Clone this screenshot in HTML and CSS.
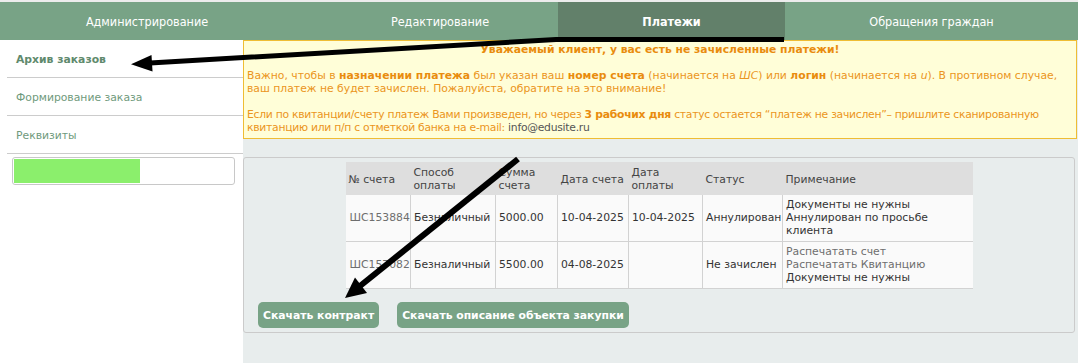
FILE: index.html
```
<!DOCTYPE html>
<html lang="ru">
<head>
  <meta charset="UTF-8" />
  <title>Платежи</title>
  <link rel="stylesheet" href="styles.css">
</head>
<body>
  <div class="page">
    <div class="topnav">
      <a class="tab tab-admin" href="#">Администрирование</a>
      <a class="tab tab-edit" href="#">Редактирование</a>
      <a class="tab active" href="#">Платежи</a>
      <a class="tab" href="#">Обращения граждан</a>
    </div>

    <div class="layout">
      <div class="sidebar">
        <ul class="side-menu">
          <li><a class="current" href="#">Архив заказов</a></li>
          <li><a href="#">Формирование заказа</a></li>
          <li><a href="#">Реквизиты</a></li>
        </ul>
        <div class="progress"><div class="progress-fill" style="width: 57.5%"></div></div>
      </div>

      <div class="content">
        <div class="notice">
          <div class="notice-title">Уважаемый клиент, у вас есть не зачисленные платежи!</div>
          <p>Важно, чтобы в <b>назначении платежа</b> был указан ваш <b>номер счета</b> (начинается на <i>ШС</i>) или <b>логин</b> (начинается на <i>u</i>). В противном случае, ваш платеж не будет зачислен. Пожалуйста, обратите на это внимание!</p>
          <p class="tight">Если по квитанции/счету платеж Вами произведен, но через <b>3 рабочих дня</b> статус остается “платеж не зачислен”– пришлите сканированную квитанцию или п/п с отметкой банка на e-mail: <span class="mail">info@edusite.ru</span></p>
        </div>

        <div class="panel">
          <table class="orders">
            <tr>
              <th class="c-num">№ счета</th>
              <th class="c-way">Способ оплаты</th>
              <th class="c-sum">Сумма счета</th>
              <th class="c-date">Дата счета</th>
              <th class="c-paid">Дата оплаты</th>
              <th class="c-status">Статус</th>
              <th class="c-note">Примечание</th>
            </tr>
            <tr>
              <td><a href="#">ШС153884</a></td>
              <td>Безналичный</td>
              <td>5000.00</td>
              <td>10-04-2025</td>
              <td>10-04-2025</td>
              <td>Аннулирован</td>
              <td class="note">Документы не нужны<br>Аннулирован по просьбе клиента</td>
            </tr>
            <tr>
              <td><a href="#">ШС157082</a></td>
              <td>Безналичный</td>
              <td>5500.00</td>
              <td>04-08-2025</td>
              <td></td>
              <td>Не зачислен</td>
              <td class="note"><a href="#">Распечатать счет</a><br><a href="#">Распечатать Квитанцию</a><br>Документы не нужны</td>
            </tr>
          </table>
          <div class="actions">
            <button>Скачать контракт</button>
            <button>Скачать описание объекта закупки</button>
          </div>
        </div>
      </div>
    </div>

    <!-- annotation arrows drawn over the screenshot -->
    <svg class="marks" width="1078" height="363" viewBox="0 0 1078 363">
      <polyline points="784,39.5 556,39.5 150,63" fill="none" stroke="#000" stroke-width="5" />
      <polygon points="131,64.2 152.5,71.5 151.5,55" fill="#000" />
      <line x1="518" y1="159" x2="360" y2="286" stroke="#000" stroke-width="6" />
      <polygon points="345,298 367,293 355,277.5" fill="#000" />
    </svg>
  </div>
</body>
</html>
```

FILE: styles.css
```
body { margin: 0; font-family: "DejaVu Sans", Verdana, sans-serif; font-size: 10.8px; background: #e8eded; }
.page { position: relative; width: 1078px; min-height: 363px; border-top: 2px solid #ececec; }
a { text-decoration: none; }

.topnav {
  display: grid;
  grid-template-columns: 294px 264px 227px 1fr;
  height: 38px;
  background: #78a386;
}
.tab {
  display: flex; align-items: center; justify-content: center;
  color: #fff;
  font-family: "DejaVu Sans Condensed", "Liberation Sans Narrow", sans-serif;
  font-size: 12.5px;
}
.tab-edit { padding-left: 28px; }
.tab.active { background: #62806a; font-weight: bold; }

.layout { display: flex; min-height: 323px; }
.sidebar { width: 243px; background: #fff; flex-shrink: 0; }
.side-menu { list-style: none; margin: 0 0 3px 7px; padding: 0; }
.side-menu li { border-bottom: 1px solid #ccc; }
.side-menu a {
  display: block; height: 34px; line-height: 34px;
  padding: 3px 0 0 9px; color: #6f9a7c;
}
.side-menu a.current { font-weight: bold; color: #5f8a6d; }
.progress {
  margin-left: 12px; width: 219px; height: 24px;
  border: 1px solid #c8c8c8; border-radius: 3px; background: #fff;
  padding: 1px;
}
.progress-fill { height: 100%; background: #8bef6c; }

.content { flex: 1; }
.notice {
  background: #fffed8; border: 1px solid #efbd34;
  color: #eb9521; padding: 2px 3px 4px; line-height: 13px;
  margin-right: 1px;
}
.notice-title { text-align: center; font-weight: bold; color: #e98c0e; }
.notice p { margin: 13px 0 0; }
.notice p.tight { letter-spacing: -0.28px; }
.notice b { color: #e98c0e; }
.notice .mail { color: #555; }

.panel {
  margin: 18px 3px 0 0;
  border: 1px solid #cbcbcb; border-radius: 3px;
  padding: 4px 0 4px;
}
.orders {
  margin: 0 auto; width: 627px;
  border-collapse: collapse; table-layout: fixed;
  line-height: 13px; color: #333;
}
.orders th {
  background: #dedede; font-weight: normal; text-align: left;
  padding: 4px 2px 3px 3px; height: 26px; color: #444;
}
.orders td {
  background: #fafafa; padding: 3px 2px 4px 3px; height: 39px;
  border-left: 1px solid #d2d2d2; border-bottom: 1px solid #d2d2d2;
  white-space: nowrap;
}
.orders td.note { white-space: normal; }
.orders td:first-child { border-left: none; padding-left: 4px; }
.orders a { color: #6e6e6e; }
.c-num { width: 60px; }
.c-way { width: 80px; }
.c-sum { width: 57px; }
.c-date { width: 66px; }
.c-paid { width: 69px; }
.c-status { width: 75px; }
.c-note { width: 185px; }

.actions { display: flex; gap: 18px; padding: 13px 0 0 14px; }
.actions button {
  background: #78a386; color: #fff; border: none; border-radius: 5px;
  font-family: "DejaVu Sans", Verdana, sans-serif; font-size: 10.8px; font-weight: bold;
  height: 26px; padding: 0 5px; cursor: pointer;
}

.marks { position: absolute; left: 0; top: -2px; pointer-events: none; }
```
